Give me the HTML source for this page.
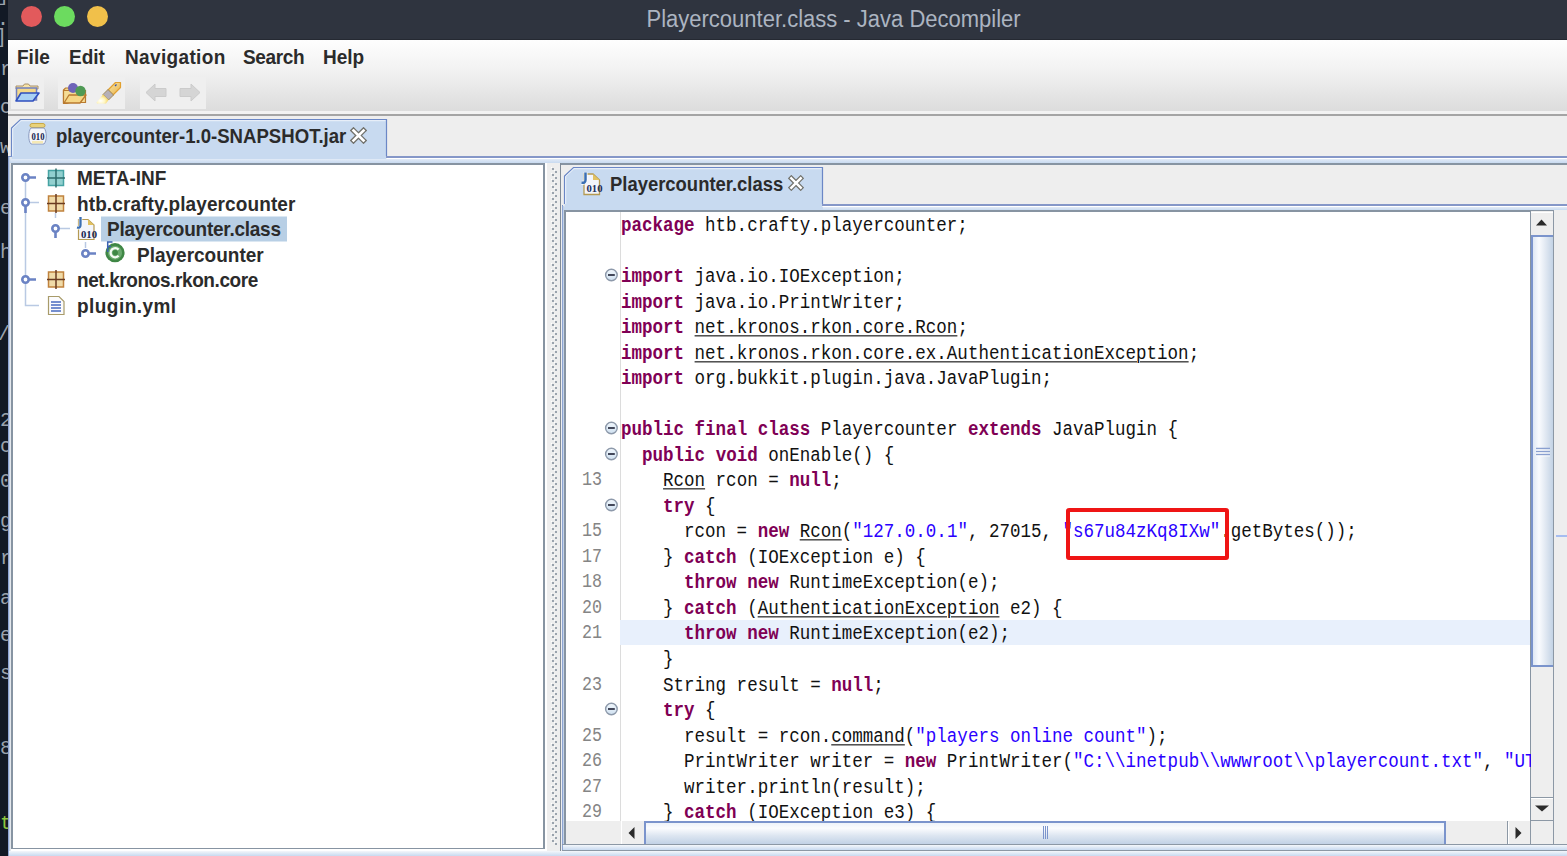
<!DOCTYPE html>
<html><head><meta charset="utf-8"><title>Playercounter.class - Java Decompiler</title>
<style>
*{margin:0;padding:0;box-sizing:border-box}
html,body{width:1567px;height:856px;overflow:hidden;background:#eeeeee;font-family:"Liberation Sans",sans-serif;position:relative}
.a{position:absolute}
#strip{left:0;top:0;width:8px;height:856px;background:#121925;overflow:hidden}
#strip span{position:absolute;font:20px "Liberation Mono",monospace;color:#9ba3ad;line-height:20px}
#title{left:8px;top:0;width:1559px;height:40px;background:#2f343f}
.tl{position:absolute;width:21px;height:21px;border-radius:50%;top:6px}
#ttext{position:absolute;left:638.5px;top:6px;font-size:22px;color:#acb4c1;white-space:nowrap;line-height:26px;transform:scaleY(1.05);transform-origin:0 4px}
#menubar{left:8px;top:40px;width:1559px;height:33px;background:transparent}
#barbg{left:8px;top:40px;width:1559px;height:71px;background:linear-gradient(#fefefe,#f1f1f1 45%,#dcdcdc)}
.mi{position:absolute;top:7px;font-weight:bold;font-size:19px;color:#2b2b2b;line-height:22px;white-space:nowrap;transform:scaleY(1.1);transform-origin:0 17px}
#toolbar{left:8px;top:73px;width:1559px;height:39px;background:transparent}
.tbg{position:absolute;background:#efefef}
.hl{position:absolute;height:1px}
.vl{position:absolute;width:1px}
.bold{font-weight:bold}
.tabt{position:absolute;font-weight:bold;font-size:19px;color:#2b2b2b;white-space:nowrap;line-height:22px;transform:scaleY(1.1);transform-origin:0 4px}
.tree{position:absolute;font-weight:bold;font-size:19px;color:#2b2b2b;white-space:nowrap;line-height:22px;transform:scaleY(1.07);transform-origin:0 17px}
.cl{position:absolute;left:621px;font-family:"Liberation Mono",monospace;font-size:17.53px;line-height:36px;height:36px;white-space:pre;color:#111;transform:scaleY(1.12);transform-origin:0 22.66px}
.cl b{color:#7f0055;font-weight:bold}
.cl i{color:#2a00ff;font-style:normal}
.cl u{text-decoration:underline;text-underline-offset:2px;text-decoration-thickness:1px}
.ln{position:absolute;left:560px;width:42px;text-align:right;font-family:"Liberation Mono",monospace;font-size:16.67px;line-height:36px;color:#858585;transform:scaleY(1.2);transform-origin:0 22.66px}
.fold{position:absolute;left:604px;width:14px;height:14px}

</style></head><body>
<div id="strip" class="a">
<span style="left:-3px;top:-14px">]</span>
<span style="left:-3px;top:10px">.</span>
<span style="left:-5px;top:28px">]</span>
<span style="left:0px;top:60px">r</span>
<span style="left:0px;top:98px">c</span>
<span style="left:0px;top:138px">w</span>
<span style="left:0px;top:199px">e</span>
<span style="left:0px;top:243px">h</span>
<span style="left:-2px;top:325px">/</span>
<span style="left:0px;top:411px">2</span>
<span style="left:0px;top:437px">c</span>
<span style="left:0px;top:472px">0</span>
<span style="left:0px;top:512px">g</span>
<span style="left:0px;top:549px">r</span>
<span style="left:0px;top:589px">a</span>
<span style="left:0px;top:626px">e</span>
<span style="left:0px;top:664px">s</span>
<span style="left:0px;top:739px">8</span>
<span style="left:0px;top:814px;color:#8cc63f">t</span>
</div>
<div id="title" class="a"><div class="a" style="left:0;top:39px;width:1559px;height:1px;background:#252932"></div>
  <div class="tl" style="left:13px;background:#e25a5c"></div>
  <div class="tl" style="left:46px;background:#6cdb5f"></div>
  <div class="tl" style="left:79px;background:#f1c04a"></div>
  <div id="ttext">Playercounter.class - Java Decompiler</div>
</div>
<div id="barbg" class="a"></div>
<div id="menubar" class="a">
  <div class="mi" style="left:9px">File</div>
  <div class="mi" style="left:61px">Edit</div>
  <div class="mi" style="left:117px;letter-spacing:0.35px">Navigation</div>
  <div class="mi" style="left:235px;letter-spacing:-0.35px">Search</div>
  <div class="mi" style="left:315px">Help</div>
</div>
<div id="toolbar" class="a">
  <div class="tbg" style="left:3px;top:4px;width:33px;height:32px"></div>
  <div class="tbg" style="left:50px;top:4px;width:67px;height:32px"></div>
  <div class="tbg" style="left:132px;top:4px;width:66px;height:32px"></div>
  <!-- open icon -->
  <svg class="a" style="left:6px;top:10px" width="26" height="21" viewBox="0 0 26 21">
    <path d="M2 3 h7 l1.5 -2 h4 l1.5 2 h8 v3 H2 z" fill="#f7e3a6" stroke="#a8906a" stroke-width="1"/>
    <path d="M2.5 5 h20 v12 h-20 z" fill="#f5d98a" stroke="#6f7fc0" stroke-width="1.5"/>
    <path d="M7 10 h18 l-6 8 h-17 z" fill="#a9d1f5" stroke="#2f4fbf" stroke-width="1.6" stroke-linejoin="round"/>
  </svg>
  <!-- open with classes icon -->
  <svg class="a" style="left:54px;top:9px" width="26" height="23" viewBox="0 0 26 23">
    <path d="M1.5 8 l2 -2 h3 l1 1.5 v13 l-3 1 h-3 z" fill="#f3d98e" stroke="#b97a2f" stroke-width="1.2"/>
    <path d="M1.5 20.5 v-12 h22 v12 z" fill="#f5dc95" stroke="#b97a2f" stroke-width="1.2"/>
    <path d="M7 13 h17 l-6 8 h-16 z" fill="#f6d685" stroke="#b97a2f" stroke-width="1.3" stroke-linejoin="round"/>
    <circle cx="11" cy="6" r="5" fill="#6e64b8"/>
    <circle cx="18.5" cy="9" r="5.2" fill="#4f9a55"/>
  </svg>
  <!-- flashlight -->
  <svg class="a" style="left:87px;top:8px" width="28" height="24" viewBox="0 0 28 24">
    <defs>
      <linearGradient id="flg" x1="0" y1="0" x2="1" y2="1"><stop offset="0" stop-color="#f6e7a8"/><stop offset="1" stop-color="#eab24a"/></linearGradient>
      <radialGradient id="lig" cx="0.35" cy="0.7" r="0.7"><stop offset="0" stop-color="#ffffff"/><stop offset="0.5" stop-color="#fff6c0"/><stop offset="1" stop-color="#f2cc50"/></radialGradient>
    </defs>
    <path d="M13 9 L20.5 1.5 H25.5 V6.5 L18 14 Z" fill="url(#flg)" stroke="#e2a02e" stroke-width="1.2" stroke-linejoin="round"/>
    <path d="M8 13.5 L13 8.5 L18.5 14 L13.5 19 Z" fill="#b5b0b8" stroke="#a08a58" stroke-width="1"/>
    <path d="M1.5 21.5 L8 13.5 L13.5 19 L11 22.5 H2 Z" fill="url(#lig)"/>
    <path d="M20 5 L21.5 3.5" stroke="#3050b0" stroke-width="1.2"/>
  </svg>
  <!-- arrows -->
  <svg class="a" style="left:137px;top:10px" width="23" height="20" viewBox="0 0 23 20">
    <path d="M1 9.5 L10 1 V5.5 H21 V13.5 H10 V18 Z" fill="#d5d5d5" stroke="#cbcbcb" stroke-width="1" stroke-linejoin="round"/>
  </svg>
  <svg class="a" style="left:170px;top:10px" width="23" height="20" viewBox="0 0 23 20">
    <path d="M22 9.5 L13 1 V5.5 H2 V13.5 H13 V18 Z" fill="#d5d5d5" stroke="#cbcbcb" stroke-width="1" stroke-linejoin="round"/>
  </svg>
</div>
<div class="a" style="left:8px;top:111px;width:1559px;height:3px;background:#f2f2f2"></div>
<div class="a" style="left:8px;top:114px;width:1559px;height:2px;background:#a4a4a4"></div>

<!-- main tabbed pane -->
<svg class="a" style="left:8px;top:115px" width="1559" height="741" viewBox="0 0 1559 741">
  <defs><linearGradient id="band1" x1="0" y1="0" x2="0" y2="1"><stop offset="0" stop-color="#e2ebf7"/><stop offset="1" stop-color="#c8daf0"/></linearGradient></defs>
  <path d="M3.5 44 V13 L12.5 4 H378.5 V44 Z" fill="#c8daf0"/>
  <path d="M3.5 41 V13 L12.5 4.5 H378.5 V41" fill="none" stroke="#6b87c6" stroke-width="1.2"/>
  <path d="M4.7 41 V13.5 L13 5.7 H377.5" fill="none" stroke="#eef3fa" stroke-width="1"/>
  <path d="M378 42 H1559" stroke="#8597c8" stroke-width="2"/>
  <path d="M0 41.5 H4" stroke="#7b94cc" stroke-width="1"/>
  <path d="M378.5 43.5 H1559" stroke="#ffffff" stroke-width="1"/>
  <rect x="1" y="44" width="1558" height="4" fill="url(#band1)"/>
  <path d="M0.5 41 V741" stroke="#7b94cc" stroke-width="1"/>
  <path d="M1.5 42 V741" stroke="#c2d2e8" stroke-width="1.5"/>
</svg>
<!-- jar icon -->
<svg class="a" style="left:28px;top:122px" width="20" height="25" viewBox="0 0 20 25">
  <rect x="2" y="1.5" width="15" height="4" rx="2" fill="#e9d27a" stroke="#c8a848" stroke-width="1"/>
  <path d="M3 6 C0 9 0 19 3 22 H16 C19 19 19 9 16 6 Z" fill="#f4f6fb" stroke="#8a9ac0" stroke-width="1"/>
  <rect x="4" y="19" width="11" height="2.5" fill="#f5e9b5"/>
  <text x="3.5" y="17.5" font-family="Liberation Serif" font-weight="bold" font-size="10" fill="#142450" textLength="13" lengthAdjust="spacingAndGlyphs">010</text>
</svg>
<div class="tabt" style="left:56px;top:125px;font-size:18.6px">playercounter-1.0-SNAPSHOT.jar</div>
<svg class="a" style="left:350px;top:127px" width="17" height="17" viewBox="0 0 17 17">
  <path d="M3.5 3.5 L13.5 13.5 M13.5 3.5 L3.5 13.5" stroke="#70706a" stroke-width="5.2" stroke-linecap="square"/>
  <path d="M3.5 3.5 L13.5 13.5 M13.5 3.5 L3.5 13.5" stroke="#ffffff" stroke-width="2.6" stroke-linecap="square"/>
</svg>

<!-- tree panel -->
<div class="a" style="left:11px;top:163px;width:534px;height:686px;background:#fff;border-left:2px solid #8794a2;border-top:2px solid #8794a2;border-right:2px solid #8794a2;border-bottom:1px solid #8794a2"></div>
<div class="a" style="left:545px;top:163px;width:2px;height:687px;background:#fff"></div>
<div class="a" style="left:11px;top:849px;width:536px;height:2px;background:#fff"></div>
<!-- tree -->
<svg class="a" style="left:13px;top:165px" width="530" height="683" viewBox="13 165 530 683">
  <g stroke="#b9c9e3" stroke-width="1.5" fill="none">
    <path d="M25.5 181 V305.5 H39"/>
    <path d="M55.5 213 V218"/>
    <path d="M85.5 242 V248"/>
    <path d="M29 202.5 H39 M59 228.5 H70"/>
  </g>
  <g fill="#ffffff" stroke="#6b83c4" stroke-width="2.6">
    <circle cx="25.5" cy="177.5" r="3.2"/>
    <circle cx="25.5" cy="202.5" r="3.2"/>
    <circle cx="55.5" cy="228.5" r="3.2"/>
    <circle cx="85.5" cy="253.5" r="3.2"/>
    <circle cx="25.5" cy="279.5" r="3.2"/>
  </g>
  <g stroke="#6b83c4" stroke-width="2.6">
    <path d="M29 177.5 H36 M29 279.5 H36 M89 253.5 H96"/>
    <path d="M25.5 206 V213 M55.5 232 V238"/>
  </g>
  <!-- package icons -->
  <g id="pk1">
    <rect x="48.5" y="170.5" width="15" height="15" fill="#92d0cf" stroke="#46a3a3" stroke-width="1.5"/>
    <path d="M47 178 H65 M56 168.5 V187.5" stroke="#2e6c6c" stroke-width="1.5"/>
  </g>
  <g>
    <rect x="48.5" y="196" width="15" height="15" fill="#f0dba8" stroke="#c0823e" stroke-width="1.5"/>
    <path d="M47 203.5 H65 M56 194 V213" stroke="#6a3c22" stroke-width="1.5"/>
  </g>
  <g>
    <rect x="48.5" y="272" width="15" height="15" fill="#f0dba8" stroke="#c0823e" stroke-width="1.5"/>
    <path d="M47 279.5 H65 M56 270 V289" stroke="#6a3c22" stroke-width="1.5"/>
  </g>
  <!-- class file icon -->
  <path d="M78.5 219.5 H88 L94 225 V239.5 H78.5 Z" fill="#f3f5fb" stroke="#b59a52" stroke-width="1.2"/>
  <path d="M88 219.5 V225 H94 Z" fill="#e0c060"/>
  <text x="81" y="237.5" font-family="Liberation Serif" font-weight="bold" font-size="10.5" fill="#142450" textLength="16" lengthAdjust="spacingAndGlyphs">010</text>
  <path d="M80.5 217 V225 Q80.5 228.5 77 227.5" fill="none" stroke="#ffffff" stroke-width="3.6"/><path d="M80.5 217 V225 Q80.5 228.5 77 227.5" fill="none" stroke="#3b6fb3" stroke-width="2.3"/>
  <!-- selection -->
  <rect x="101" y="216.5" width="186" height="25" fill="#b8cfe5"/>
  <!-- C icon -->
  <circle cx="115" cy="252.7" r="9.6" fill="#3f8745"/>
  <circle cx="115" cy="252.7" r="7" fill="#6aa96e"/>
  <path d="M118.6 249.6 A4.6 4.6 0 1 0 118.6 255.8" fill="none" stroke="#f4fbf4" stroke-width="2.3"/>
  <circle cx="115.3" cy="252.7" r="2.6" fill="#3f8745"/>
  <path d="M107.7 252 V242 H112.5 M107.7 246.5 H111" fill="none" stroke="#3a62b0" stroke-width="1.5"/>
  <!-- doc icon -->
  <path d="M48.5 296.5 H59 L64 301.5 V314.5 H48.5 Z" fill="#fbfbfd" stroke="#a89b6a" stroke-width="1.2"/>
  <g stroke="#4a6bbf" stroke-width="1.3"><path d="M51 302 H61 M51 305 H61 M51 308 H61 M51 311 H61"/></g>
</svg>
<div class="tree" style="left:77px;top:168px">META-INF</div>
<div class="tree" style="left:77px;top:193.6px;letter-spacing:0.1px">htb.crafty.playercounter</div>
<div class="tree" style="left:107px;top:219.2px;letter-spacing:-0.25px">Playercounter.class</div>
<div class="tree" style="left:137px;top:244.8px">Playercounter</div>
<div class="tree" style="left:77px;top:270.4px;letter-spacing:-0.4px">net.kronos.rkon.core</div>
<div class="tree" style="left:77px;top:296px;letter-spacing:0.45px">plugin.yml</div>

<!-- splitter dots -->
<svg class="a" style="left:547px;top:160px" width="13" height="696" viewBox="547 160 13 696">
<rect x="551" y="167" width="1" height="1" fill="#fff"/><rect x="552" y="168" width="2" height="2" fill="#9aa3ad"/>
<rect x="554" y="170" width="1" height="1" fill="#fff"/><rect x="555" y="171" width="2" height="2" fill="#9aa3ad"/>
<rect x="551" y="173" width="1" height="1" fill="#fff"/><rect x="552" y="174" width="2" height="2" fill="#9aa3ad"/>
<rect x="554" y="176" width="1" height="1" fill="#fff"/><rect x="555" y="177" width="2" height="2" fill="#9aa3ad"/>
<rect x="551" y="179" width="1" height="1" fill="#fff"/><rect x="552" y="180" width="2" height="2" fill="#9aa3ad"/>
<rect x="554" y="182" width="1" height="1" fill="#fff"/><rect x="555" y="183" width="2" height="2" fill="#9aa3ad"/>
<rect x="551" y="185" width="1" height="1" fill="#fff"/><rect x="552" y="186" width="2" height="2" fill="#9aa3ad"/>
<rect x="554" y="188" width="1" height="1" fill="#fff"/><rect x="555" y="189" width="2" height="2" fill="#9aa3ad"/>
<rect x="551" y="191" width="1" height="1" fill="#fff"/><rect x="552" y="192" width="2" height="2" fill="#9aa3ad"/>
<rect x="554" y="194" width="1" height="1" fill="#fff"/><rect x="555" y="195" width="2" height="2" fill="#9aa3ad"/>
<rect x="551" y="197" width="1" height="1" fill="#fff"/><rect x="552" y="198" width="2" height="2" fill="#9aa3ad"/>
<rect x="554" y="200" width="1" height="1" fill="#fff"/><rect x="555" y="201" width="2" height="2" fill="#9aa3ad"/>
<rect x="551" y="203" width="1" height="1" fill="#fff"/><rect x="552" y="204" width="2" height="2" fill="#9aa3ad"/>
<rect x="554" y="206" width="1" height="1" fill="#fff"/><rect x="555" y="207" width="2" height="2" fill="#9aa3ad"/>
<rect x="551" y="209" width="1" height="1" fill="#fff"/><rect x="552" y="210" width="2" height="2" fill="#9aa3ad"/>
<rect x="554" y="212" width="1" height="1" fill="#fff"/><rect x="555" y="213" width="2" height="2" fill="#9aa3ad"/>
<rect x="551" y="215" width="1" height="1" fill="#fff"/><rect x="552" y="216" width="2" height="2" fill="#9aa3ad"/>
<rect x="554" y="218" width="1" height="1" fill="#fff"/><rect x="555" y="219" width="2" height="2" fill="#9aa3ad"/>
<rect x="551" y="221" width="1" height="1" fill="#fff"/><rect x="552" y="222" width="2" height="2" fill="#9aa3ad"/>
<rect x="554" y="224" width="1" height="1" fill="#fff"/><rect x="555" y="225" width="2" height="2" fill="#9aa3ad"/>
<rect x="551" y="227" width="1" height="1" fill="#fff"/><rect x="552" y="228" width="2" height="2" fill="#9aa3ad"/>
<rect x="554" y="230" width="1" height="1" fill="#fff"/><rect x="555" y="231" width="2" height="2" fill="#9aa3ad"/>
<rect x="551" y="233" width="1" height="1" fill="#fff"/><rect x="552" y="234" width="2" height="2" fill="#9aa3ad"/>
<rect x="554" y="236" width="1" height="1" fill="#fff"/><rect x="555" y="237" width="2" height="2" fill="#9aa3ad"/>
<rect x="551" y="239" width="1" height="1" fill="#fff"/><rect x="552" y="240" width="2" height="2" fill="#9aa3ad"/>
<rect x="554" y="242" width="1" height="1" fill="#fff"/><rect x="555" y="243" width="2" height="2" fill="#9aa3ad"/>
<rect x="551" y="245" width="1" height="1" fill="#fff"/><rect x="552" y="246" width="2" height="2" fill="#9aa3ad"/>
<rect x="554" y="248" width="1" height="1" fill="#fff"/><rect x="555" y="249" width="2" height="2" fill="#9aa3ad"/>
<rect x="551" y="251" width="1" height="1" fill="#fff"/><rect x="552" y="252" width="2" height="2" fill="#9aa3ad"/>
<rect x="554" y="254" width="1" height="1" fill="#fff"/><rect x="555" y="255" width="2" height="2" fill="#9aa3ad"/>
<rect x="551" y="257" width="1" height="1" fill="#fff"/><rect x="552" y="258" width="2" height="2" fill="#9aa3ad"/>
<rect x="554" y="260" width="1" height="1" fill="#fff"/><rect x="555" y="261" width="2" height="2" fill="#9aa3ad"/>
<rect x="551" y="263" width="1" height="1" fill="#fff"/><rect x="552" y="264" width="2" height="2" fill="#9aa3ad"/>
<rect x="554" y="266" width="1" height="1" fill="#fff"/><rect x="555" y="267" width="2" height="2" fill="#9aa3ad"/>
<rect x="551" y="269" width="1" height="1" fill="#fff"/><rect x="552" y="270" width="2" height="2" fill="#9aa3ad"/>
<rect x="554" y="272" width="1" height="1" fill="#fff"/><rect x="555" y="273" width="2" height="2" fill="#9aa3ad"/>
<rect x="551" y="275" width="1" height="1" fill="#fff"/><rect x="552" y="276" width="2" height="2" fill="#9aa3ad"/>
<rect x="554" y="278" width="1" height="1" fill="#fff"/><rect x="555" y="279" width="2" height="2" fill="#9aa3ad"/>
<rect x="551" y="281" width="1" height="1" fill="#fff"/><rect x="552" y="282" width="2" height="2" fill="#9aa3ad"/>
<rect x="554" y="284" width="1" height="1" fill="#fff"/><rect x="555" y="285" width="2" height="2" fill="#9aa3ad"/>
<rect x="551" y="287" width="1" height="1" fill="#fff"/><rect x="552" y="288" width="2" height="2" fill="#9aa3ad"/>
<rect x="554" y="290" width="1" height="1" fill="#fff"/><rect x="555" y="291" width="2" height="2" fill="#9aa3ad"/>
<rect x="551" y="293" width="1" height="1" fill="#fff"/><rect x="552" y="294" width="2" height="2" fill="#9aa3ad"/>
<rect x="554" y="296" width="1" height="1" fill="#fff"/><rect x="555" y="297" width="2" height="2" fill="#9aa3ad"/>
<rect x="551" y="299" width="1" height="1" fill="#fff"/><rect x="552" y="300" width="2" height="2" fill="#9aa3ad"/>
<rect x="554" y="302" width="1" height="1" fill="#fff"/><rect x="555" y="303" width="2" height="2" fill="#9aa3ad"/>
<rect x="551" y="305" width="1" height="1" fill="#fff"/><rect x="552" y="306" width="2" height="2" fill="#9aa3ad"/>
<rect x="554" y="308" width="1" height="1" fill="#fff"/><rect x="555" y="309" width="2" height="2" fill="#9aa3ad"/>
<rect x="551" y="311" width="1" height="1" fill="#fff"/><rect x="552" y="312" width="2" height="2" fill="#9aa3ad"/>
<rect x="554" y="314" width="1" height="1" fill="#fff"/><rect x="555" y="315" width="2" height="2" fill="#9aa3ad"/>
<rect x="551" y="317" width="1" height="1" fill="#fff"/><rect x="552" y="318" width="2" height="2" fill="#9aa3ad"/>
<rect x="554" y="320" width="1" height="1" fill="#fff"/><rect x="555" y="321" width="2" height="2" fill="#9aa3ad"/>
<rect x="551" y="323" width="1" height="1" fill="#fff"/><rect x="552" y="324" width="2" height="2" fill="#9aa3ad"/>
<rect x="554" y="326" width="1" height="1" fill="#fff"/><rect x="555" y="327" width="2" height="2" fill="#9aa3ad"/>
<rect x="551" y="329" width="1" height="1" fill="#fff"/><rect x="552" y="330" width="2" height="2" fill="#9aa3ad"/>
<rect x="554" y="332" width="1" height="1" fill="#fff"/><rect x="555" y="333" width="2" height="2" fill="#9aa3ad"/>
<rect x="551" y="335" width="1" height="1" fill="#fff"/><rect x="552" y="336" width="2" height="2" fill="#9aa3ad"/>
<rect x="554" y="338" width="1" height="1" fill="#fff"/><rect x="555" y="339" width="2" height="2" fill="#9aa3ad"/>
<rect x="551" y="341" width="1" height="1" fill="#fff"/><rect x="552" y="342" width="2" height="2" fill="#9aa3ad"/>
<rect x="554" y="344" width="1" height="1" fill="#fff"/><rect x="555" y="345" width="2" height="2" fill="#9aa3ad"/>
<rect x="551" y="347" width="1" height="1" fill="#fff"/><rect x="552" y="348" width="2" height="2" fill="#9aa3ad"/>
<rect x="554" y="350" width="1" height="1" fill="#fff"/><rect x="555" y="351" width="2" height="2" fill="#9aa3ad"/>
<rect x="551" y="353" width="1" height="1" fill="#fff"/><rect x="552" y="354" width="2" height="2" fill="#9aa3ad"/>
<rect x="554" y="356" width="1" height="1" fill="#fff"/><rect x="555" y="357" width="2" height="2" fill="#9aa3ad"/>
<rect x="551" y="359" width="1" height="1" fill="#fff"/><rect x="552" y="360" width="2" height="2" fill="#9aa3ad"/>
<rect x="554" y="362" width="1" height="1" fill="#fff"/><rect x="555" y="363" width="2" height="2" fill="#9aa3ad"/>
<rect x="551" y="365" width="1" height="1" fill="#fff"/><rect x="552" y="366" width="2" height="2" fill="#9aa3ad"/>
<rect x="554" y="368" width="1" height="1" fill="#fff"/><rect x="555" y="369" width="2" height="2" fill="#9aa3ad"/>
<rect x="551" y="371" width="1" height="1" fill="#fff"/><rect x="552" y="372" width="2" height="2" fill="#9aa3ad"/>
<rect x="554" y="374" width="1" height="1" fill="#fff"/><rect x="555" y="375" width="2" height="2" fill="#9aa3ad"/>
<rect x="551" y="377" width="1" height="1" fill="#fff"/><rect x="552" y="378" width="2" height="2" fill="#9aa3ad"/>
<rect x="554" y="380" width="1" height="1" fill="#fff"/><rect x="555" y="381" width="2" height="2" fill="#9aa3ad"/>
<rect x="551" y="383" width="1" height="1" fill="#fff"/><rect x="552" y="384" width="2" height="2" fill="#9aa3ad"/>
<rect x="554" y="386" width="1" height="1" fill="#fff"/><rect x="555" y="387" width="2" height="2" fill="#9aa3ad"/>
<rect x="551" y="389" width="1" height="1" fill="#fff"/><rect x="552" y="390" width="2" height="2" fill="#9aa3ad"/>
<rect x="554" y="392" width="1" height="1" fill="#fff"/><rect x="555" y="393" width="2" height="2" fill="#9aa3ad"/>
<rect x="551" y="395" width="1" height="1" fill="#fff"/><rect x="552" y="396" width="2" height="2" fill="#9aa3ad"/>
<rect x="554" y="398" width="1" height="1" fill="#fff"/><rect x="555" y="399" width="2" height="2" fill="#9aa3ad"/>
<rect x="551" y="401" width="1" height="1" fill="#fff"/><rect x="552" y="402" width="2" height="2" fill="#9aa3ad"/>
<rect x="554" y="404" width="1" height="1" fill="#fff"/><rect x="555" y="405" width="2" height="2" fill="#9aa3ad"/>
<rect x="551" y="407" width="1" height="1" fill="#fff"/><rect x="552" y="408" width="2" height="2" fill="#9aa3ad"/>
<rect x="554" y="410" width="1" height="1" fill="#fff"/><rect x="555" y="411" width="2" height="2" fill="#9aa3ad"/>
<rect x="551" y="413" width="1" height="1" fill="#fff"/><rect x="552" y="414" width="2" height="2" fill="#9aa3ad"/>
<rect x="554" y="416" width="1" height="1" fill="#fff"/><rect x="555" y="417" width="2" height="2" fill="#9aa3ad"/>
<rect x="551" y="419" width="1" height="1" fill="#fff"/><rect x="552" y="420" width="2" height="2" fill="#9aa3ad"/>
<rect x="554" y="422" width="1" height="1" fill="#fff"/><rect x="555" y="423" width="2" height="2" fill="#9aa3ad"/>
<rect x="551" y="425" width="1" height="1" fill="#fff"/><rect x="552" y="426" width="2" height="2" fill="#9aa3ad"/>
<rect x="554" y="428" width="1" height="1" fill="#fff"/><rect x="555" y="429" width="2" height="2" fill="#9aa3ad"/>
<rect x="551" y="431" width="1" height="1" fill="#fff"/><rect x="552" y="432" width="2" height="2" fill="#9aa3ad"/>
<rect x="554" y="434" width="1" height="1" fill="#fff"/><rect x="555" y="435" width="2" height="2" fill="#9aa3ad"/>
<rect x="551" y="437" width="1" height="1" fill="#fff"/><rect x="552" y="438" width="2" height="2" fill="#9aa3ad"/>
<rect x="554" y="440" width="1" height="1" fill="#fff"/><rect x="555" y="441" width="2" height="2" fill="#9aa3ad"/>
<rect x="551" y="443" width="1" height="1" fill="#fff"/><rect x="552" y="444" width="2" height="2" fill="#9aa3ad"/>
<rect x="554" y="446" width="1" height="1" fill="#fff"/><rect x="555" y="447" width="2" height="2" fill="#9aa3ad"/>
<rect x="551" y="449" width="1" height="1" fill="#fff"/><rect x="552" y="450" width="2" height="2" fill="#9aa3ad"/>
<rect x="554" y="452" width="1" height="1" fill="#fff"/><rect x="555" y="453" width="2" height="2" fill="#9aa3ad"/>
<rect x="551" y="455" width="1" height="1" fill="#fff"/><rect x="552" y="456" width="2" height="2" fill="#9aa3ad"/>
<rect x="554" y="458" width="1" height="1" fill="#fff"/><rect x="555" y="459" width="2" height="2" fill="#9aa3ad"/>
<rect x="551" y="461" width="1" height="1" fill="#fff"/><rect x="552" y="462" width="2" height="2" fill="#9aa3ad"/>
<rect x="554" y="464" width="1" height="1" fill="#fff"/><rect x="555" y="465" width="2" height="2" fill="#9aa3ad"/>
<rect x="551" y="467" width="1" height="1" fill="#fff"/><rect x="552" y="468" width="2" height="2" fill="#9aa3ad"/>
<rect x="554" y="470" width="1" height="1" fill="#fff"/><rect x="555" y="471" width="2" height="2" fill="#9aa3ad"/>
<rect x="551" y="473" width="1" height="1" fill="#fff"/><rect x="552" y="474" width="2" height="2" fill="#9aa3ad"/>
<rect x="554" y="476" width="1" height="1" fill="#fff"/><rect x="555" y="477" width="2" height="2" fill="#9aa3ad"/>
<rect x="551" y="479" width="1" height="1" fill="#fff"/><rect x="552" y="480" width="2" height="2" fill="#9aa3ad"/>
<rect x="554" y="482" width="1" height="1" fill="#fff"/><rect x="555" y="483" width="2" height="2" fill="#9aa3ad"/>
<rect x="551" y="485" width="1" height="1" fill="#fff"/><rect x="552" y="486" width="2" height="2" fill="#9aa3ad"/>
<rect x="554" y="488" width="1" height="1" fill="#fff"/><rect x="555" y="489" width="2" height="2" fill="#9aa3ad"/>
<rect x="551" y="491" width="1" height="1" fill="#fff"/><rect x="552" y="492" width="2" height="2" fill="#9aa3ad"/>
<rect x="554" y="494" width="1" height="1" fill="#fff"/><rect x="555" y="495" width="2" height="2" fill="#9aa3ad"/>
<rect x="551" y="497" width="1" height="1" fill="#fff"/><rect x="552" y="498" width="2" height="2" fill="#9aa3ad"/>
<rect x="554" y="500" width="1" height="1" fill="#fff"/><rect x="555" y="501" width="2" height="2" fill="#9aa3ad"/>
<rect x="551" y="503" width="1" height="1" fill="#fff"/><rect x="552" y="504" width="2" height="2" fill="#9aa3ad"/>
<rect x="554" y="506" width="1" height="1" fill="#fff"/><rect x="555" y="507" width="2" height="2" fill="#9aa3ad"/>
<rect x="551" y="509" width="1" height="1" fill="#fff"/><rect x="552" y="510" width="2" height="2" fill="#9aa3ad"/>
<rect x="554" y="512" width="1" height="1" fill="#fff"/><rect x="555" y="513" width="2" height="2" fill="#9aa3ad"/>
<rect x="551" y="515" width="1" height="1" fill="#fff"/><rect x="552" y="516" width="2" height="2" fill="#9aa3ad"/>
<rect x="554" y="518" width="1" height="1" fill="#fff"/><rect x="555" y="519" width="2" height="2" fill="#9aa3ad"/>
<rect x="551" y="521" width="1" height="1" fill="#fff"/><rect x="552" y="522" width="2" height="2" fill="#9aa3ad"/>
<rect x="554" y="524" width="1" height="1" fill="#fff"/><rect x="555" y="525" width="2" height="2" fill="#9aa3ad"/>
<rect x="551" y="527" width="1" height="1" fill="#fff"/><rect x="552" y="528" width="2" height="2" fill="#9aa3ad"/>
<rect x="554" y="530" width="1" height="1" fill="#fff"/><rect x="555" y="531" width="2" height="2" fill="#9aa3ad"/>
<rect x="551" y="533" width="1" height="1" fill="#fff"/><rect x="552" y="534" width="2" height="2" fill="#9aa3ad"/>
<rect x="554" y="536" width="1" height="1" fill="#fff"/><rect x="555" y="537" width="2" height="2" fill="#9aa3ad"/>
<rect x="551" y="539" width="1" height="1" fill="#fff"/><rect x="552" y="540" width="2" height="2" fill="#9aa3ad"/>
<rect x="554" y="542" width="1" height="1" fill="#fff"/><rect x="555" y="543" width="2" height="2" fill="#9aa3ad"/>
<rect x="551" y="545" width="1" height="1" fill="#fff"/><rect x="552" y="546" width="2" height="2" fill="#9aa3ad"/>
<rect x="554" y="548" width="1" height="1" fill="#fff"/><rect x="555" y="549" width="2" height="2" fill="#9aa3ad"/>
<rect x="551" y="551" width="1" height="1" fill="#fff"/><rect x="552" y="552" width="2" height="2" fill="#9aa3ad"/>
<rect x="554" y="554" width="1" height="1" fill="#fff"/><rect x="555" y="555" width="2" height="2" fill="#9aa3ad"/>
<rect x="551" y="557" width="1" height="1" fill="#fff"/><rect x="552" y="558" width="2" height="2" fill="#9aa3ad"/>
<rect x="554" y="560" width="1" height="1" fill="#fff"/><rect x="555" y="561" width="2" height="2" fill="#9aa3ad"/>
<rect x="551" y="563" width="1" height="1" fill="#fff"/><rect x="552" y="564" width="2" height="2" fill="#9aa3ad"/>
<rect x="554" y="566" width="1" height="1" fill="#fff"/><rect x="555" y="567" width="2" height="2" fill="#9aa3ad"/>
<rect x="551" y="569" width="1" height="1" fill="#fff"/><rect x="552" y="570" width="2" height="2" fill="#9aa3ad"/>
<rect x="554" y="572" width="1" height="1" fill="#fff"/><rect x="555" y="573" width="2" height="2" fill="#9aa3ad"/>
<rect x="551" y="575" width="1" height="1" fill="#fff"/><rect x="552" y="576" width="2" height="2" fill="#9aa3ad"/>
<rect x="554" y="578" width="1" height="1" fill="#fff"/><rect x="555" y="579" width="2" height="2" fill="#9aa3ad"/>
<rect x="551" y="581" width="1" height="1" fill="#fff"/><rect x="552" y="582" width="2" height="2" fill="#9aa3ad"/>
<rect x="554" y="584" width="1" height="1" fill="#fff"/><rect x="555" y="585" width="2" height="2" fill="#9aa3ad"/>
<rect x="551" y="587" width="1" height="1" fill="#fff"/><rect x="552" y="588" width="2" height="2" fill="#9aa3ad"/>
<rect x="554" y="590" width="1" height="1" fill="#fff"/><rect x="555" y="591" width="2" height="2" fill="#9aa3ad"/>
<rect x="551" y="593" width="1" height="1" fill="#fff"/><rect x="552" y="594" width="2" height="2" fill="#9aa3ad"/>
<rect x="554" y="596" width="1" height="1" fill="#fff"/><rect x="555" y="597" width="2" height="2" fill="#9aa3ad"/>
<rect x="551" y="599" width="1" height="1" fill="#fff"/><rect x="552" y="600" width="2" height="2" fill="#9aa3ad"/>
<rect x="554" y="602" width="1" height="1" fill="#fff"/><rect x="555" y="603" width="2" height="2" fill="#9aa3ad"/>
<rect x="551" y="605" width="1" height="1" fill="#fff"/><rect x="552" y="606" width="2" height="2" fill="#9aa3ad"/>
<rect x="554" y="608" width="1" height="1" fill="#fff"/><rect x="555" y="609" width="2" height="2" fill="#9aa3ad"/>
<rect x="551" y="611" width="1" height="1" fill="#fff"/><rect x="552" y="612" width="2" height="2" fill="#9aa3ad"/>
<rect x="554" y="614" width="1" height="1" fill="#fff"/><rect x="555" y="615" width="2" height="2" fill="#9aa3ad"/>
<rect x="551" y="617" width="1" height="1" fill="#fff"/><rect x="552" y="618" width="2" height="2" fill="#9aa3ad"/>
<rect x="554" y="620" width="1" height="1" fill="#fff"/><rect x="555" y="621" width="2" height="2" fill="#9aa3ad"/>
<rect x="551" y="623" width="1" height="1" fill="#fff"/><rect x="552" y="624" width="2" height="2" fill="#9aa3ad"/>
<rect x="554" y="626" width="1" height="1" fill="#fff"/><rect x="555" y="627" width="2" height="2" fill="#9aa3ad"/>
<rect x="551" y="629" width="1" height="1" fill="#fff"/><rect x="552" y="630" width="2" height="2" fill="#9aa3ad"/>
<rect x="554" y="632" width="1" height="1" fill="#fff"/><rect x="555" y="633" width="2" height="2" fill="#9aa3ad"/>
<rect x="551" y="635" width="1" height="1" fill="#fff"/><rect x="552" y="636" width="2" height="2" fill="#9aa3ad"/>
<rect x="554" y="638" width="1" height="1" fill="#fff"/><rect x="555" y="639" width="2" height="2" fill="#9aa3ad"/>
<rect x="551" y="641" width="1" height="1" fill="#fff"/><rect x="552" y="642" width="2" height="2" fill="#9aa3ad"/>
<rect x="554" y="644" width="1" height="1" fill="#fff"/><rect x="555" y="645" width="2" height="2" fill="#9aa3ad"/>
<rect x="551" y="647" width="1" height="1" fill="#fff"/><rect x="552" y="648" width="2" height="2" fill="#9aa3ad"/>
<rect x="554" y="650" width="1" height="1" fill="#fff"/><rect x="555" y="651" width="2" height="2" fill="#9aa3ad"/>
<rect x="551" y="653" width="1" height="1" fill="#fff"/><rect x="552" y="654" width="2" height="2" fill="#9aa3ad"/>
<rect x="554" y="656" width="1" height="1" fill="#fff"/><rect x="555" y="657" width="2" height="2" fill="#9aa3ad"/>
<rect x="551" y="659" width="1" height="1" fill="#fff"/><rect x="552" y="660" width="2" height="2" fill="#9aa3ad"/>
<rect x="554" y="662" width="1" height="1" fill="#fff"/><rect x="555" y="663" width="2" height="2" fill="#9aa3ad"/>
<rect x="551" y="665" width="1" height="1" fill="#fff"/><rect x="552" y="666" width="2" height="2" fill="#9aa3ad"/>
<rect x="554" y="668" width="1" height="1" fill="#fff"/><rect x="555" y="669" width="2" height="2" fill="#9aa3ad"/>
<rect x="551" y="671" width="1" height="1" fill="#fff"/><rect x="552" y="672" width="2" height="2" fill="#9aa3ad"/>
<rect x="554" y="674" width="1" height="1" fill="#fff"/><rect x="555" y="675" width="2" height="2" fill="#9aa3ad"/>
<rect x="551" y="677" width="1" height="1" fill="#fff"/><rect x="552" y="678" width="2" height="2" fill="#9aa3ad"/>
<rect x="554" y="680" width="1" height="1" fill="#fff"/><rect x="555" y="681" width="2" height="2" fill="#9aa3ad"/>
<rect x="551" y="683" width="1" height="1" fill="#fff"/><rect x="552" y="684" width="2" height="2" fill="#9aa3ad"/>
<rect x="554" y="686" width="1" height="1" fill="#fff"/><rect x="555" y="687" width="2" height="2" fill="#9aa3ad"/>
<rect x="551" y="689" width="1" height="1" fill="#fff"/><rect x="552" y="690" width="2" height="2" fill="#9aa3ad"/>
<rect x="554" y="692" width="1" height="1" fill="#fff"/><rect x="555" y="693" width="2" height="2" fill="#9aa3ad"/>
<rect x="551" y="695" width="1" height="1" fill="#fff"/><rect x="552" y="696" width="2" height="2" fill="#9aa3ad"/>
<rect x="554" y="698" width="1" height="1" fill="#fff"/><rect x="555" y="699" width="2" height="2" fill="#9aa3ad"/>
<rect x="551" y="701" width="1" height="1" fill="#fff"/><rect x="552" y="702" width="2" height="2" fill="#9aa3ad"/>
<rect x="554" y="704" width="1" height="1" fill="#fff"/><rect x="555" y="705" width="2" height="2" fill="#9aa3ad"/>
<rect x="551" y="707" width="1" height="1" fill="#fff"/><rect x="552" y="708" width="2" height="2" fill="#9aa3ad"/>
<rect x="554" y="710" width="1" height="1" fill="#fff"/><rect x="555" y="711" width="2" height="2" fill="#9aa3ad"/>
<rect x="551" y="713" width="1" height="1" fill="#fff"/><rect x="552" y="714" width="2" height="2" fill="#9aa3ad"/>
<rect x="554" y="716" width="1" height="1" fill="#fff"/><rect x="555" y="717" width="2" height="2" fill="#9aa3ad"/>
<rect x="551" y="719" width="1" height="1" fill="#fff"/><rect x="552" y="720" width="2" height="2" fill="#9aa3ad"/>
<rect x="554" y="722" width="1" height="1" fill="#fff"/><rect x="555" y="723" width="2" height="2" fill="#9aa3ad"/>
<rect x="551" y="725" width="1" height="1" fill="#fff"/><rect x="552" y="726" width="2" height="2" fill="#9aa3ad"/>
<rect x="554" y="728" width="1" height="1" fill="#fff"/><rect x="555" y="729" width="2" height="2" fill="#9aa3ad"/>
<rect x="551" y="731" width="1" height="1" fill="#fff"/><rect x="552" y="732" width="2" height="2" fill="#9aa3ad"/>
<rect x="554" y="734" width="1" height="1" fill="#fff"/><rect x="555" y="735" width="2" height="2" fill="#9aa3ad"/>
<rect x="551" y="737" width="1" height="1" fill="#fff"/><rect x="552" y="738" width="2" height="2" fill="#9aa3ad"/>
<rect x="554" y="740" width="1" height="1" fill="#fff"/><rect x="555" y="741" width="2" height="2" fill="#9aa3ad"/>
<rect x="551" y="743" width="1" height="1" fill="#fff"/><rect x="552" y="744" width="2" height="2" fill="#9aa3ad"/>
<rect x="554" y="746" width="1" height="1" fill="#fff"/><rect x="555" y="747" width="2" height="2" fill="#9aa3ad"/>
<rect x="551" y="749" width="1" height="1" fill="#fff"/><rect x="552" y="750" width="2" height="2" fill="#9aa3ad"/>
<rect x="554" y="752" width="1" height="1" fill="#fff"/><rect x="555" y="753" width="2" height="2" fill="#9aa3ad"/>
<rect x="551" y="755" width="1" height="1" fill="#fff"/><rect x="552" y="756" width="2" height="2" fill="#9aa3ad"/>
<rect x="554" y="758" width="1" height="1" fill="#fff"/><rect x="555" y="759" width="2" height="2" fill="#9aa3ad"/>
<rect x="551" y="761" width="1" height="1" fill="#fff"/><rect x="552" y="762" width="2" height="2" fill="#9aa3ad"/>
<rect x="554" y="764" width="1" height="1" fill="#fff"/><rect x="555" y="765" width="2" height="2" fill="#9aa3ad"/>
<rect x="551" y="767" width="1" height="1" fill="#fff"/><rect x="552" y="768" width="2" height="2" fill="#9aa3ad"/>
<rect x="554" y="770" width="1" height="1" fill="#fff"/><rect x="555" y="771" width="2" height="2" fill="#9aa3ad"/>
<rect x="551" y="773" width="1" height="1" fill="#fff"/><rect x="552" y="774" width="2" height="2" fill="#9aa3ad"/>
<rect x="554" y="776" width="1" height="1" fill="#fff"/><rect x="555" y="777" width="2" height="2" fill="#9aa3ad"/>
<rect x="551" y="779" width="1" height="1" fill="#fff"/><rect x="552" y="780" width="2" height="2" fill="#9aa3ad"/>
<rect x="554" y="782" width="1" height="1" fill="#fff"/><rect x="555" y="783" width="2" height="2" fill="#9aa3ad"/>
<rect x="551" y="785" width="1" height="1" fill="#fff"/><rect x="552" y="786" width="2" height="2" fill="#9aa3ad"/>
<rect x="554" y="788" width="1" height="1" fill="#fff"/><rect x="555" y="789" width="2" height="2" fill="#9aa3ad"/>
<rect x="551" y="791" width="1" height="1" fill="#fff"/><rect x="552" y="792" width="2" height="2" fill="#9aa3ad"/>
<rect x="554" y="794" width="1" height="1" fill="#fff"/><rect x="555" y="795" width="2" height="2" fill="#9aa3ad"/>
<rect x="551" y="797" width="1" height="1" fill="#fff"/><rect x="552" y="798" width="2" height="2" fill="#9aa3ad"/>
<rect x="554" y="800" width="1" height="1" fill="#fff"/><rect x="555" y="801" width="2" height="2" fill="#9aa3ad"/>
<rect x="551" y="803" width="1" height="1" fill="#fff"/><rect x="552" y="804" width="2" height="2" fill="#9aa3ad"/>
<rect x="554" y="806" width="1" height="1" fill="#fff"/><rect x="555" y="807" width="2" height="2" fill="#9aa3ad"/>
<rect x="551" y="809" width="1" height="1" fill="#fff"/><rect x="552" y="810" width="2" height="2" fill="#9aa3ad"/>
<rect x="554" y="812" width="1" height="1" fill="#fff"/><rect x="555" y="813" width="2" height="2" fill="#9aa3ad"/>
<rect x="551" y="815" width="1" height="1" fill="#fff"/><rect x="552" y="816" width="2" height="2" fill="#9aa3ad"/>
<rect x="554" y="818" width="1" height="1" fill="#fff"/><rect x="555" y="819" width="2" height="2" fill="#9aa3ad"/>
<rect x="551" y="821" width="1" height="1" fill="#fff"/><rect x="552" y="822" width="2" height="2" fill="#9aa3ad"/>
<rect x="554" y="824" width="1" height="1" fill="#fff"/><rect x="555" y="825" width="2" height="2" fill="#9aa3ad"/>
<rect x="551" y="827" width="1" height="1" fill="#fff"/><rect x="552" y="828" width="2" height="2" fill="#9aa3ad"/>
<rect x="554" y="830" width="1" height="1" fill="#fff"/><rect x="555" y="831" width="2" height="2" fill="#9aa3ad"/>
<rect x="551" y="833" width="1" height="1" fill="#fff"/><rect x="552" y="834" width="2" height="2" fill="#9aa3ad"/>
<rect x="554" y="836" width="1" height="1" fill="#fff"/><rect x="555" y="837" width="2" height="2" fill="#9aa3ad"/>
<rect x="551" y="839" width="1" height="1" fill="#fff"/><rect x="552" y="840" width="2" height="2" fill="#9aa3ad"/>
<rect x="554" y="842" width="1" height="1" fill="#fff"/><rect x="555" y="843" width="2" height="2" fill="#9aa3ad"/>
</svg>
<!-- right panel -->
<div class="a" style="left:560px;top:163px;width:1007px;height:2px;background:#8794a2"></div>
<div class="a" style="left:560px;top:163px;width:1px;height:693px;background:#7f8a97"></div>
<svg class="a" style="left:560px;top:163px" width="1007" height="693" viewBox="560 163 1007 693">
  <path d="M564.5 208 V176 L573.5 167.5 H822.5 V208 Z" fill="#c8daf0"/>
  <defs><linearGradient id="band2" x1="0" y1="0" x2="0" y2="1"><stop offset="0" stop-color="#e2ebf7"/><stop offset="1" stop-color="#c8daf0"/></linearGradient></defs>
  <path d="M564.5 204 V176 L573.5 167.5 H822.5 V204" fill="none" stroke="#6b87c6" stroke-width="1.2"/>
  <path d="M565.7 204 V176.5 L574 168.7 H821.5" fill="none" stroke="#eef3fa" stroke-width="1"/>
  <path d="M822 205 H1567" stroke="#8597c8" stroke-width="2"/>
  <path d="M822.5 206.5 H1567" stroke="#ffffff" stroke-width="1"/>
  <rect x="823" y="207" width="744" height="3" fill="url(#band2)"/>
  <rect x="563" y="207" width="260" height="3" fill="#c8daf0"/>
  <path d="M562.5 205 V856" stroke="#7b94cc" stroke-width="1"/>
  <path d="M563.5 206 V856" stroke="#c2d2e8" stroke-width="1.5"/>
</svg>
<!-- class icon in tab -->
<svg class="a" style="left:578px;top:171px" width="28" height="26" viewBox="0 0 28 26">
  <path d="M6 3 H15 L21.5 9 V23.5 H6 Z" fill="#f3f5fb" stroke="#b59a52" stroke-width="1.3"/>
  <path d="M15 3 V9 H21.5 Z" fill="#e2c262"/>
  <text x="8.5" y="20.5" font-family="Liberation Serif" font-weight="bold" font-size="11" fill="#1c2e5e" textLength="16" lengthAdjust="spacingAndGlyphs">010</text>
  <path d="M7.5 1.5 V9 Q7.5 12.5 3.5 11.5" fill="none" stroke="#ffffff" stroke-width="4"/>
  <path d="M7.5 1.5 V9 Q7.5 12.5 3.5 11.5" fill="none" stroke="#3b6fb3" stroke-width="2.5"/>
</svg>
<div class="tabt" style="left:610px;top:173px;font-size:18.45px">Playercounter.class</div>
<svg class="a" style="left:787.5px;top:175.2px" width="16" height="16" viewBox="0 0 17 17">
  <path d="M3.5 3.5 L13.5 13.5 M13.5 3.5 L3.5 13.5" stroke="#70706a" stroke-width="5.2" stroke-linecap="square"/>
  <path d="M3.5 3.5 L13.5 13.5 M13.5 3.5 L3.5 13.5" stroke="#ffffff" stroke-width="2.6" stroke-linecap="square"/>
</svg>

<!-- code scroll pane -->
<div class="a" style="left:564px;top:210px;width:990px;height:635px;background:#8794a2"></div>
<div class="a" style="left:566px;top:212px;width:964px;height:609px;background:#fff;overflow:hidden">
</div>
<div class="a" style="left:620px;top:212px;width:1px;height:609px;background:#dcdcdc"></div>
<div class="a" style="left:620px;top:620px;width:910px;height:25px;background:#e8f0fc"></div>
<svg class="a" style="left:603px;top:267.34px" width="17" height="16" viewBox="0 0 17 16"><defs><linearGradient id="fg2" x1="0" y1="0" x2="0" y2="1"><stop offset="0" stop-color="#f2f8fd"/><stop offset="1" stop-color="#cfe0f0"/></linearGradient></defs><circle cx="8.4" cy="8" r="5.8" fill="url(#fg2)" stroke="#8d99aa" stroke-width="1.4"/><path d="M5 8 H11.8" stroke="#262a3e" stroke-width="1.7"/></svg>
<svg class="a" style="left:603px;top:420.46px" width="17" height="16" viewBox="0 0 17 16"><defs><linearGradient id="fg8" x1="0" y1="0" x2="0" y2="1"><stop offset="0" stop-color="#f2f8fd"/><stop offset="1" stop-color="#cfe0f0"/></linearGradient></defs><circle cx="8.4" cy="8" r="5.8" fill="url(#fg8)" stroke="#8d99aa" stroke-width="1.4"/><path d="M5 8 H11.8" stroke="#262a3e" stroke-width="1.7"/></svg>
<svg class="a" style="left:603px;top:445.98px" width="17" height="16" viewBox="0 0 17 16"><defs><linearGradient id="fg9" x1="0" y1="0" x2="0" y2="1"><stop offset="0" stop-color="#f2f8fd"/><stop offset="1" stop-color="#cfe0f0"/></linearGradient></defs><circle cx="8.4" cy="8" r="5.8" fill="url(#fg9)" stroke="#8d99aa" stroke-width="1.4"/><path d="M5 8 H11.8" stroke="#262a3e" stroke-width="1.7"/></svg>
<div class="ln" style="top:463.34px">13</div>
<svg class="a" style="left:603px;top:497.02px" width="17" height="16" viewBox="0 0 17 16"><defs><linearGradient id="fg11" x1="0" y1="0" x2="0" y2="1"><stop offset="0" stop-color="#f2f8fd"/><stop offset="1" stop-color="#cfe0f0"/></linearGradient></defs><circle cx="8.4" cy="8" r="5.8" fill="url(#fg11)" stroke="#8d99aa" stroke-width="1.4"/><path d="M5 8 H11.8" stroke="#262a3e" stroke-width="1.7"/></svg>
<div class="ln" style="top:514.38px">15</div>
<div class="ln" style="top:539.90px">17</div>
<div class="ln" style="top:565.42px">18</div>
<div class="ln" style="top:590.94px">20</div>
<div class="ln" style="top:616.46px">21</div>
<div class="ln" style="top:667.50px">23</div>
<svg class="a" style="left:603px;top:701.18px" width="17" height="16" viewBox="0 0 17 16"><defs><linearGradient id="fg19" x1="0" y1="0" x2="0" y2="1"><stop offset="0" stop-color="#f2f8fd"/><stop offset="1" stop-color="#cfe0f0"/></linearGradient></defs><circle cx="8.4" cy="8" r="5.8" fill="url(#fg19)" stroke="#8d99aa" stroke-width="1.4"/><path d="M5 8 H11.8" stroke="#262a3e" stroke-width="1.7"/></svg>
<div class="ln" style="top:718.54px">25</div>
<div class="ln" style="top:744.06px">26</div>
<div class="ln" style="top:769.58px">27</div>
<div class="ln" style="top:795.10px">29</div>
<div class="cl" style="top:208.14px"><b>package</b> htb.crafty.playercounter;</div>
<div class="cl" style="top:233.66px"></div>
<div class="cl" style="top:259.18px"><b>import</b> java.io.IOException;</div>
<div class="cl" style="top:284.70px"><b>import</b> java.io.PrintWriter;</div>
<div class="cl" style="top:310.22px"><b>import</b> <u>net.kronos.rkon.core.Rcon</u>;</div>
<div class="cl" style="top:335.74px"><b>import</b> <u>net.kronos.rkon.core.ex.AuthenticationException</u>;</div>
<div class="cl" style="top:361.26px"><b>import</b> org.bukkit.plugin.java.JavaPlugin;</div>
<div class="cl" style="top:386.78px"></div>
<div class="cl" style="top:412.30px"><b>public</b> <b>final</b> <b>class</b> Playercounter <b>extends</b> JavaPlugin {</div>
<div class="cl" style="top:437.82px">  <b>public</b> <b>void</b> onEnable() {</div>
<div class="cl" style="top:463.34px">    <u>Rcon</u> rcon = <b>null</b>;</div>
<div class="cl" style="top:488.86px">    <b>try</b> {</div>
<div class="cl" style="top:514.38px">      rcon = <b>new</b> <u>Rcon</u>(<i>"127.0.0.1"</i>, 27015, <i>"s67u84zKq8IXw"</i>.getBytes());</div>
<div class="cl" style="top:539.90px">    } <b>catch</b> (IOException e) {</div>
<div class="cl" style="top:565.42px">      <b>throw</b> <b>new</b> RuntimeException(e);</div>
<div class="cl" style="top:590.94px">    } <b>catch</b> (<u>AuthenticationException</u> e2) {</div>
<div class="cl" style="top:616.46px">      <b>throw</b> <b>new</b> RuntimeException(e2);</div>
<div class="cl" style="top:641.98px">    }</div>
<div class="cl" style="top:667.50px">    String result = <b>null</b>;</div>
<div class="cl" style="top:693.02px">    <b>try</b> {</div>
<div class="cl" style="top:718.54px">      result = rcon.<u>command</u>(<i>"players online count"</i>);</div>
<div class="cl" style="top:744.06px">      PrintWriter writer = <b>new</b> PrintWriter(<i>"C:\\inetpub\\wwwroot\\playercount.txt"</i>, <i>"UTF-8"</i>);</div>
<div class="cl" style="top:769.58px">      writer.println(result);</div>
<div class="cl" style="top:795.10px">    } <b>catch</b> (IOException e3) {</div>
<div class="cl" style="top:820.62px">      <b>throw</b> <b>new</b> RuntimeException(e3);</div>
<!-- red box -->
<div class="a" style="left:1066px;top:508px;width:163px;height:52px;border:4px solid #ef1515;border-radius:3px"></div>

<!-- vertical scrollbar -->
<div class="a" style="left:1531px;top:211px;width:22px;height:610px;background:#eeeeee"></div>
<div class="a" style="left:1531px;top:212px;width:22px;height:1px;background:#fff"></div>
<svg class="a" style="left:1536px;top:219px" width="11" height="7" viewBox="0 0 11 7"><path d="M0 6.5 L5.5 0.5 L11 6.5 Z" fill="#2a2a2a"/></svg>
<div class="a" style="left:1531px;top:235px;width:22px;height:432px;background:linear-gradient(90deg,#dfe8f4 0%,#f9fbfe 30%,#e3eaf3 60%,#c3d3e5 100%);border:1px solid #7b94cc;border-left-width:2px;border-top-width:2px;border-bottom-width:2px;border-right:none"></div>
<svg class="a" style="left:1536px;top:446px" width="15" height="11" viewBox="0 0 15 11"><path d="M0 2.5 H14 M0 5.5 H14 M0 8.5 H14" stroke="#8aa0d0" stroke-width="1.4"/><path d="M0 4 H14 M0 7 H14 M0 10 H14" stroke="#ffffff" stroke-width="0.8"/></svg>
<div class="a" style="left:1531px;top:797px;width:22px;height:1px;background:#8c98a5"></div>
<div class="a" style="left:1531px;top:798px;width:22px;height:1px;background:#fff"></div>
<svg class="a" style="left:1535px;top:805px" width="14" height="7" viewBox="0 0 14 7"><path d="M0 0.5 H14 L7 6.5 Z" fill="#2a2a2a"/></svg>
<div class="a" style="left:1531px;top:820px;width:22px;height:1px;background:#8c98a5"></div>

<!-- horizontal scrollbar -->
<div class="a" style="left:566px;top:821px;width:987px;height:23px;background:#eeeeee"></div>
<div class="a" style="left:621px;top:821px;width:1px;height:23px;background:#fff"></div>
<svg class="a" style="left:628px;top:827px" width="7" height="12" viewBox="0 0 7 12"><path d="M6.5 0 V12 L0.5 6 Z" fill="#2a2a2a"/></svg>
<div class="a" style="left:644px;top:821px;width:802px;height:23px;background:linear-gradient(#eef3fa 0%,#fbfcfe 25%,#dde6f1 60%,#c2d2e6 100%);border-top:2px solid #7b94cc;border-left:2px solid #7b94cc;border-right:2px solid #7b94cc"></div>
<svg class="a" style="left:1042px;top:826px" width="7" height="13" viewBox="0 0 7 13"><path d="M1.5 0 V13 M3.5 0 V13 M5.5 0 V13" stroke="#7b94cc" stroke-width="1"/></svg>
<div class="a" style="left:1507px;top:821px;width:1px;height:23px;background:#8c98a5"></div>
<div class="a" style="left:1508px;top:822px;width:1px;height:22px;background:#fff"></div>
<svg class="a" style="left:1515px;top:827px" width="7" height="12" viewBox="0 0 7 12"><path d="M0.5 0 V12 L6.5 6 Z" fill="#2a2a2a"/></svg>
<div class="a" style="left:1530px;top:821px;width:1px;height:23px;background:#8c98a5"></div>

<!-- bottom bands -->
<div class="a" style="left:562px;top:844px;width:1005px;height:1px;background:#8c98a5"></div>
<div class="a" style="left:563px;top:845px;width:1004px;height:5px;background:linear-gradient(#f4f7fb,#c8daf0)"></div>
<div class="a" style="left:562px;top:850px;width:1005px;height:1px;background:#8c98a5"></div>
<div class="a" style="left:9px;top:851px;width:1558px;height:5px;background:linear-gradient(#f4f7fb,#c8daf0)"></div>
<div class="a" style="left:1553px;top:210px;width:1px;height:635px;background:#8c98a5"></div>
<div class="a" style="left:1554px;top:211px;width:13px;height:633px;background:#eeeeee"></div>
<div class="a" style="left:1556px;top:535px;width:11px;height:2px;background:#a6bdf0"></div>

</body></html>
